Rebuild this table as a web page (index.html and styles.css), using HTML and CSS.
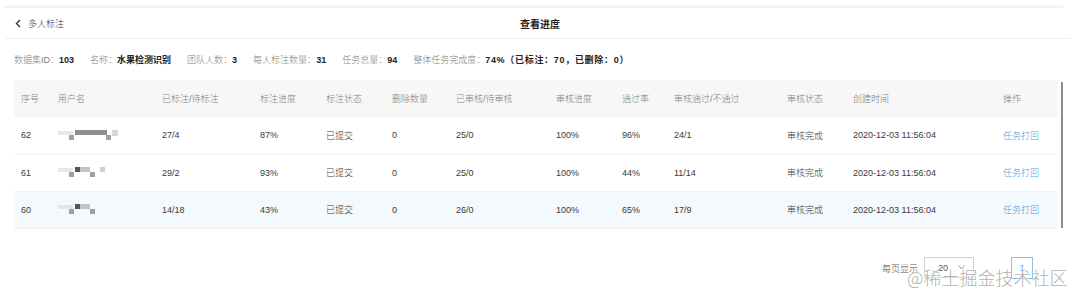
FILE: index.html
```html
<!DOCTYPE html>
<html lang="zh-CN">
<head>
<meta charset="utf-8">
<title>查看进度</title>
<link rel="stylesheet" href="styles.css">
</head>
<body>
<div class="page">
  <div class="topline"></div>
  <header class="titlebar">
    <a class="back">
      <svg class="chev" width="6" height="9" viewBox="0 0 6 9"><polyline points="5,1 1.5,4.5 5,8" fill="none" stroke="#333" stroke-width="1.4"/></svg>
      <span>多人标注</span>
    </a>
    <h1 class="title">查看进度</h1>
    <span></span>
  </header>

  <div class="info">
    <span class="item"><span class="lbl">数据集ID：</span><b>103</b></span>
    <span class="item"><span class="lbl">名称：</span><b>水果检测识别</b></span>
    <span class="item"><span class="lbl">团队人数：</span><b>3</b></span>
    <span class="item"><span class="lbl">每人标注数量：</span><b>31</b></span>
    <span class="item"><span class="lbl">任务总量：</span><b>94</b></span>
    <span class="item"><span class="lbl">整体任务完成度：</span><b class="wide">74%（已标注：70，已删除：0）</b></span>
  </div>

  <div class="table-wrap">
    <table class="grid">
      <colgroup>
        <col class="c1"><col class="c2"><col class="c3"><col class="c4"><col class="c5"><col class="c6"><col class="c7"><col class="c8"><col class="c9"><col class="c10"><col class="c11"><col class="c12"><col class="c13">
      </colgroup>
      <thead>
        <tr>
          <th>序号</th><th>用户名</th><th>已标注/待标注</th><th>标注进度</th><th>标注状态</th><th>删除数量</th><th>已审核/待审核</th><th>审核进度</th><th>通过率</th><th>审核通过/不通过</th><th>审核状态</th><th>创建时间</th><th>操作</th>
        </tr>
      </thead>
      <tbody>
        <tr>
          <td>62</td>
          <td><svg class="blur" width="62" height="11" viewBox="0 0 62 11">
            <rect x="0" y="1" width="15" height="4" fill="#e8e8e8"/>
            <rect x="17" y="0" width="32" height="5" fill="#8f8f8f"/>
            <rect x="11" y="5" width="5" height="5" fill="#a0a0a0"/>
            <rect x="48" y="5" width="5" height="5" fill="#a0a0a0"/>
            <rect x="54" y="0" width="6" height="6" fill="#d8d8d8"/>
          </svg></td>
          <td>27/4</td><td>87%</td><td>已提交</td><td>0</td><td>25/0</td><td>100%</td><td>96%</td><td>24/1</td><td>审核完成</td><td>2020-12-03 11:56:04</td><td><a class="link">任务打回</a></td>
        </tr>
        <tr>
          <td>61</td>
          <td><svg class="blur" width="62" height="11" viewBox="0 0 62 11">
            <rect x="0" y="1" width="15" height="4" fill="#e8e8e8"/>
            <rect x="17" y="0" width="5" height="5" fill="#555"/>
            <rect x="22" y="0" width="10" height="5" fill="#c4c4c4"/>
            <rect x="11" y="5" width="5" height="5" fill="#a0a0a0"/>
            <rect x="32" y="5" width="5" height="5" fill="#a0a0a0"/>
            <rect x="42" y="0" width="5" height="5" fill="#d0d0d0"/>
          </svg></td>
          <td>29/2</td><td>93%</td><td>已提交</td><td>0</td><td>25/0</td><td>100%</td><td>44%</td><td>11/14</td><td>审核完成</td><td>2020-12-03 11:56:04</td><td><a class="link">任务打回</a></td>
        </tr>
        <tr class="hover">
          <td>60</td>
          <td><svg class="blur" width="62" height="11" viewBox="0 0 62 11">
            <rect x="0" y="1" width="15" height="4" fill="#e4e4e4"/>
            <rect x="17" y="0" width="5" height="5" fill="#555"/>
            <rect x="22" y="0" width="10" height="5" fill="#c4c4c4"/>
            <rect x="11" y="5" width="5" height="5" fill="#a0a0a0"/>
            <rect x="32" y="5" width="5" height="5" fill="#a0a0a0"/>
          </svg></td>
          <td>14/18</td><td>43%</td><td>已提交</td><td>0</td><td>26/0</td><td>100%</td><td>65%</td><td>17/9</td><td>审核完成</td><td>2020-12-03 11:56:04</td><td><a class="link">任务打回</a></td>
        </tr>
      </tbody>
    </table>
    <div class="scrollbar"></div>
  </div>

  <div class="pager">
    <span class="pager-label">每页显示</span>
    <span class="select"><span>20</span>
      <svg width="7" height="5" viewBox="0 0 7 5"><polyline points="0.5,0.5 3.5,4 6.5,0.5" fill="none" stroke="#999" stroke-width="1"/></svg>
    </span>
    <span class="pagebtn">1</span>
  </div>

  <div class="watermark">@稀土掘金技术社区</div>
</div>
</body>
</html>
```

FILE: styles.css
```css
* { box-sizing: border-box; }
html, body { margin: 0; padding: 0; background: #fff; }
body {
  font-family: "Liberation Sans", "Noto Sans CJK SC", sans-serif;
  font-size: 9px;
  font-weight: 300;
  color: #333;
}
.page { position: relative; width: 1080px; height: 300px; overflow: hidden; }

.topline {
  margin: 5px 17px 0 5px;
  height: 3px;
  background: linear-gradient(#fbfbfb, #ededed);
}

.titlebar {
  margin: 0 10px 0 5px;
  padding-left: 10px;
  height: 31px;
  border-bottom: 1px solid #efefef;
  display: grid;
  grid-template-columns: 1fr auto 1fr;
  align-items: center;
}
.back { display: flex; align-items: center; gap: 7px; color: #333; font-size: 9px; }
.chev { display: block; }
.title { margin: 0 0 0 -5px; font-size: 10px; font-weight: 700; color: #222; }

.info {
  height: 41px;
  padding-left: 14px;
  display: flex;
  align-items: center;
  gap: 16px;
}
.info .lbl { color: #808080; }
.info b { color: #222; font-weight: 700; }
.info b.wide { letter-spacing: 0.7px; }

.table-wrap { display: flex; margin-left: 14px; gap: 3px; }
.grid { width: 1044px; border-collapse: collapse; table-layout: fixed; }
.c1 { width: 37px; } .c2 { width: 104px; } .c3 { width: 98px; } .c4 { width: 66px; }
.c5 { width: 66px; } .c6 { width: 64px; } .c7 { width: 100px; } .c8 { width: 66px; }
.c9 { width: 52px; } .c10 { width: 113px; } .c11 { width: 66px; } .c12 { width: 150px; }
.c13 { width: 62px; }
.grid th {
  height: 37px;
  padding: 0 7px;
  text-align: left;
  font-weight: 300;
  color: #808080;
  background: #f7f7f7;
}
.grid td {
  height: 37px;
  padding: 0 7px;
  text-align: left;
  color: #3a3a3a;
  border-bottom: 1px solid #f0f0f0;
  white-space: nowrap;
}
.grid tr.hover td { background: #f3f9fc; }
.blur { display: block; }
.link { color: #4d9ee6; }
.scrollbar { width: 2px; height: 146px; background: #8c8c8c; margin-top: 2px; }

.pager {
  margin-top: 28px;
  padding-right: 47px;
  display: flex;
  justify-content: flex-end;
  align-items: center;
  height: 22px;
}
.pager-label { color: #555; margin-right: 6px; margin-top: 2px; }
.select {
  width: 50px; height: 21px;
  border: 1px solid #d2d2d2;
  display: flex; align-items: center;
  padding: 0 8px 0 13px;
  justify-content: space-between;
  color: #555;
  margin-right: 37px;
}
.pagebtn {
  width: 22px; height: 22px;
  border: 1px solid #8ebde6;
  color: #4d9ee6;
  display: flex; align-items: center; justify-content: center;
}

.watermark {
  position: absolute;
  left: 907px;
  top: 265px;
  font-size: 18px;
  line-height: 24px;
  color: rgba(140, 140, 140, 0.7);
  text-shadow: 0 0 2px #fff, 0 0 1px #fff;
  white-space: nowrap;
  font-family: "Noto Sans CJK SC", sans-serif;
  font-weight: 300;
}
```
